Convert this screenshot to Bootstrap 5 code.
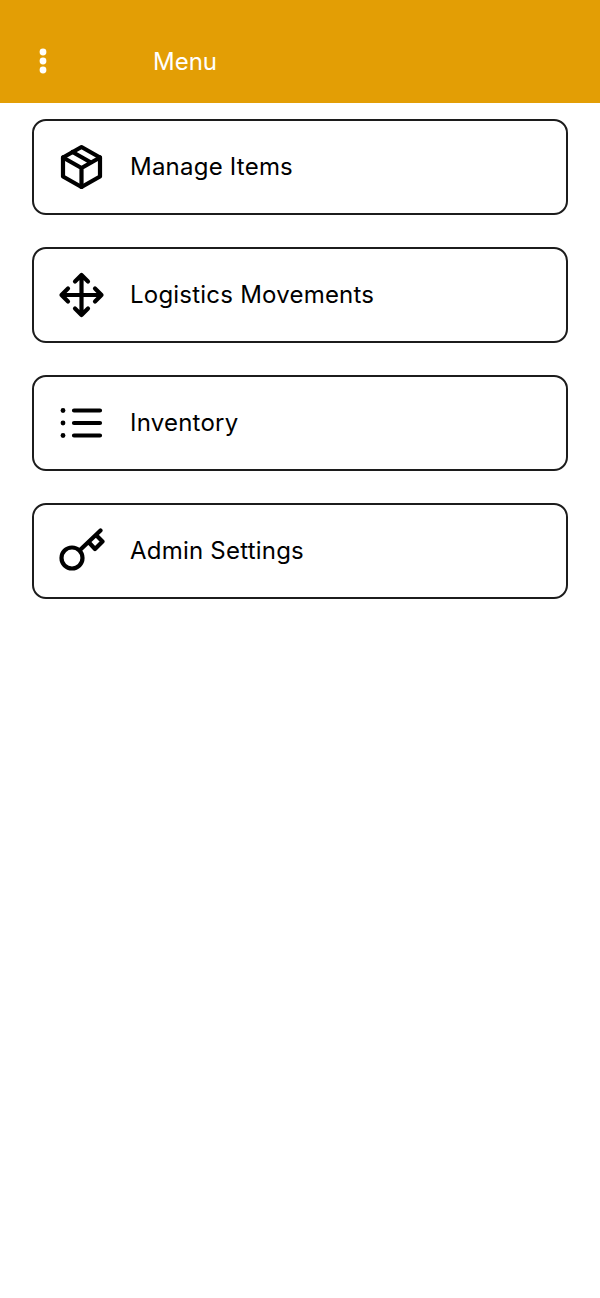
<!DOCTYPE html>
<html lang="en">
<head>
<meta charset="utf-8">
<title>Menu</title>
<link href="https://cdn.jsdelivr.net/npm/bootstrap@5.3.0/dist/css/bootstrap.min.css" rel="stylesheet">
<style>
body { font-family: Inter, "Liberation Sans", sans-serif; background: #fff; color: #000; }
.app-bar { height: 103px; background: #e39e05; padding-left: 37px; padding-top: 19px; }
.app-bar svg { width: 12px; height: 30px; }
.app-title { color: #fff; font-size: 24px; font-weight: 400; margin: 2px 0 0 104px; line-height: 30px; letter-spacing: 0; }
.menu-list { padding: 16px 32px 0; gap: 32px; }
.menu-tile { height: 96px; border: 2px solid #1c1c1c; border-radius: 14px; padding-left: 23px; color: #000; text-decoration: none; font-size: 24px; line-height: 30px; letter-spacing: 0.22px; }
.menu-tile svg { width: 48px; height: 48px; margin-right: 25px; flex: none; fill: none; stroke: #000; stroke-width: 4.2; stroke-linecap: round; stroke-linejoin: round; }
</style>
</head>
<body>
<header class="app-bar d-flex align-items-center">
  <svg viewBox="0 0 12 30" aria-label="More" class="flex-shrink-0 d-block"><circle cx="6" cy="6" r="3.4" fill="#fff"/><circle cx="6" cy="15" r="3.4" fill="#fff"/><circle cx="6" cy="24" r="3.4" fill="#fff"/></svg>
  <h1 class="app-title">Menu</h1>
</header>
<nav class="menu-list d-flex flex-column">
  <a href="#" class="menu-tile d-flex align-items-center">
    <svg viewBox="0 0 48 48"><path d="M24.500 4 43 14.500V33.500L24.500 44 6 33.500V14.500Z"/><path d="M6 14.500 24.500 25 43 14.500M24.500 25V44M15.500 9 34 19.500"/></svg>
    <span>Manage Items</span>
  </a>
  <a href="#" class="menu-tile d-flex align-items-center">
    <svg viewBox="0 0 48 48"><path d="M24.500 4V44M4.500 24H44.500M18 10.500 24.500 4 31 10.500M18 37.500 24.500 44 31 37.500M11 17.500 4.500 24 11 30.500M38 17.500 44.500 24 38 30.500"/></svg>
    <span>Logistics Movements</span>
  </a>
  <a href="#" class="menu-tile d-flex align-items-center">
    <svg viewBox="0 0 48 48"><path d="M17 11.500H43M17 24H43M17 36.500H43"/><circle cx="6" cy="11.500" r="2.400" fill="#000" stroke="none"/><circle cx="6" cy="24" r="2.400" fill="#000" stroke="none"/><circle cx="6" cy="36.500" r="2.400" fill="#000" stroke="none"/></svg>
    <span>Inventory</span>
  </a>
  <a href="#" class="menu-tile d-flex align-items-center">
    <svg viewBox="0 0 48 48"><circle cx="15" cy="31" r="10.500"/><path d="M23 23 43.500 3.500M32 15.500 38 22 45.500 14.500 39 8"/></svg>
    <span>Admin Settings</span>
  </a>
</nav>
</body>
</html>
